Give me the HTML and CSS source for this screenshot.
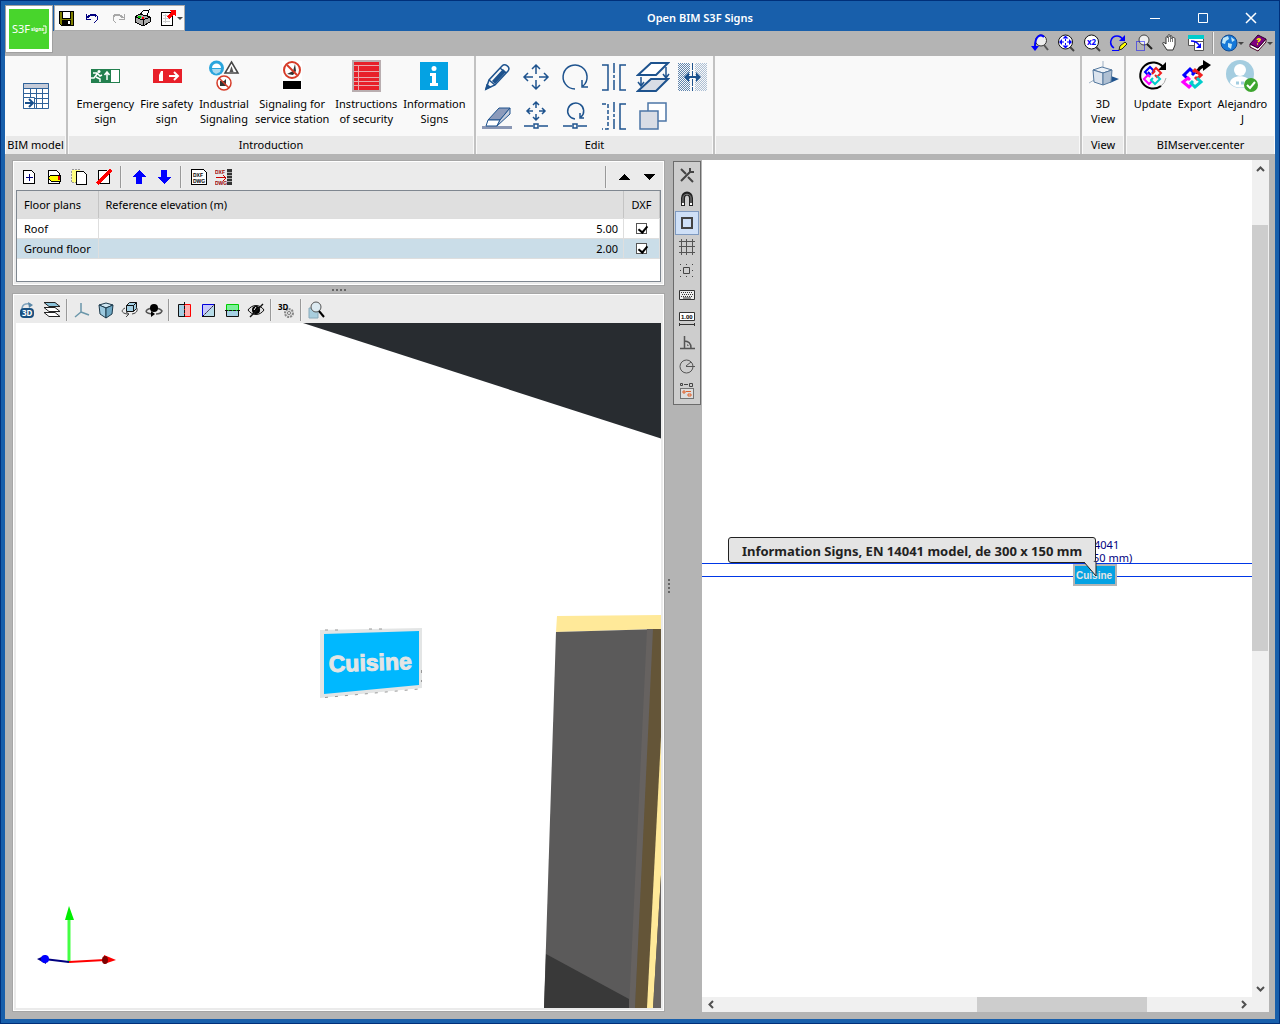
FILE: index.html
```html
<!DOCTYPE html>
<html lang="en">
<head>
  <meta charset="UTF-8">
  <meta name="viewport" content="width=device-width, initial-scale=1.0">
  <title>Open BIM S3F Signs</title>
  <link rel="stylesheet" href="styles.css">
</head>
<body>
<div class="window">

  <header class="header">
    <div class="titlebar">
      <div class="quick crisp">
        <button aria-label="Save"><svg width="16" height="16"><path d="M1 1h14v14H3l-2-2z" fill="#808000" stroke="#000"/><path d="M4 1h8v7H4z" fill="#fff" stroke="#000"/><path d="M4 10h9v5H4z" fill="#000"/><path d="M10 11h2v3h-2z" fill="#fff"/></svg></button>
        <button aria-label="Undo"><svg width="16" height="16" fill="none" stroke="#000080"><path d="M2 4v5h5M2 8l5-4h4l2 2v4l-3 3M3 8l5-3h3l1 2" /></svg></button>
        <button aria-label="Redo"><svg width="16" height="16" fill="none" stroke="#a8a8a8"><path d="M14 4v5H9M14 8L9 4H5L3 6v4l3 3M13 8L8 5H5L4 7"/></svg></button>
        <button aria-label="Print"><svg width="18" height="18"><path d="M5 7l4-5 6-1-2 6" fill="#fff" stroke="#000"/><path d="M1 8l5-3 10 3v5l-7 4-8-4z" fill="#a8a8a8" stroke="#000"/><path d="M1 8l8 3 7-3M9 11v6" fill="none" stroke="#000"/><path d="M4 8h3" stroke="#0c0" stroke-width="2"/><path d="M8 9h2" stroke="#f00" stroke-width="2"/></svg></button>
        <button class="drop" aria-label="Export sheet"><svg width="18" height="18"><path d="M2 3h11v13H2z" fill="#fff" stroke="#000"/><path d="M4 6h5M4 9h7M4 12h7M6 5v9" stroke="#ccc"/><path d="M9 9l5-5" stroke="#f00" stroke-width="3"/><path d="M10 1h7v7z" fill="#f00"/></svg></button>
      </div>
      <h1>Open BIM S3F Signs</h1>
      <div class="winctl">
        <button aria-label="Minimize"><svg width="12" height="12"><path d="M1 6.500h10" stroke="#fff"/></svg></button>
        <button aria-label="Maximize"><svg width="12" height="12"><path d="M1.500 1.500h9v9h-9z" fill="none" stroke="#fff"/></svg></button>
        <button aria-label="Close"><svg width="12" height="12"><path d="M1 1l10 10M11 1L1 11" stroke="#fff" stroke-width="1.500"/></svg></button>
      </div>
    </div>

    <button class="logo" aria-label="Application menu">
      <svg width="40" height="40"><path fill="#48d52c" d="M0 0h40v40H0z"/><text class="logo-name" x="3" y="24">S3F</text><text class="logo-sub" x="22" y="22">signs</text><path d="M34 17h3v7h-3" fill="none" stroke="#fff"/></svg>
    </button>

    <div class="viewbar">
      <button aria-label="Previous zoom"><svg width="18" height="18"><circle cx="10" cy="6.500" r="5.500" fill="#eee" stroke="#333"/><path d="M13 11l4 5" stroke="#555" stroke-width="2"/><path d="M13 3C9-1 4 3 4 12" fill="none" stroke="#00f" stroke-width="2"/><path d="M0 12h8l-4 5z" fill="#00f"/></svg></button>
      <button aria-label="Zoom extents"><svg width="18" height="18"><circle cx="8.500" cy="8" r="7" fill="#fff" stroke="#111"/><path d="M13 13l4 4" stroke="#444" stroke-width="2"/><path d="M8.500 1.500l3 3h-6zM8.500 14.500l3-3h-6zM2 8l3-3v6zM15 8l-3-3v6z" fill="#00f"/><path d="M8.500 5v2M8.500 9v2M5 8h2M10 8h2" stroke="#00f"/></svg></button>
      <button aria-label="Zoom times two"><svg width="18" height="18"><circle cx="8.500" cy="8" r="7" fill="#fff" stroke="#111"/><path d="M13 13l4 4" stroke="#444" stroke-width="2"/><text class="x2" x="4" y="11">x2</text></svg></button>
      <button aria-label="Redraw"><svg width="18" height="18"><path d="M5 14C-1 10 2 2 8 2c4 0 5 2 6 4" fill="none" stroke="#00f" stroke-width="1.500"/><path d="M16 1v6h-6z" fill="#00f"/><path d="M3 16.500h7" stroke="#00f"/><path d="M10 16l1-4 5-4 2 2-5 5z" fill="#ff0" stroke="#222"/></svg></button>
      <button aria-label="Zoom window"><svg width="18" height="18"><circle cx="9" cy="6" r="5" fill="#eee" stroke="#444"/><path d="M12 10l5 5" stroke="#222" stroke-width="2"/><path d="M1.500 7.500h8v9h-8z" fill="none" stroke="#00f" stroke-dasharray="1 1"/></svg></button>
      <button aria-label="Pan"><svg width="18" height="18"><path d="M6 16L2 10c-1-2 1-2 3 0V4c0-2 2-2 2 0V2c0-2 2-2 2 0v1c0-2 2-2 2 0v2c0-2 3-2 3 0v6l-2 5z" fill="#fff" stroke="#333"/><path d="M7.500 4v4M9.500 3v5M11.500 4v4" stroke="#777"/></svg></button>
      <button aria-label="Window list"><svg width="18" height="18"><path d="M1.500 1.500h15v10h-15z" fill="#fff" stroke="#555"/><path d="M1 1h16v4H1z" fill="#0cc"/><path d="M7.500 7.500h9v9h-9z" fill="#fff" stroke="#555"/><path d="M4 7c4 0 6 1 8 4" fill="none" stroke="#00f" stroke-width="1.500"/><path d="M14 9v5H9z" fill="#00f"/></svg></button>
      <span class="sep"></span>
      <button class="drop" aria-label="Web"><svg width="18" height="18"><circle cx="9" cy="9" r="8" fill="#1678d8" stroke="#124a90"/><path d="M3 4l5-2 1 3-3 2-1 3-3-1zM8 9l4 1-1 5-3-2zM11 3l4 3-3 2z" fill="#bfe6f8"/></svg></button>
      <button class="drop" aria-label="Help"><svg width="18" height="18"><path d="M1 10l8 4 8-9v3l-8 9-8-4z" fill="#fff" stroke="#402"/><path d="M1 10l8-9 8 4-8 9z" fill="#800080" stroke="#300030"/><path d="M8 6c1-2 4-1 3 0l-2 2M8 10h1" stroke="#ff0" stroke-width="1.500" fill="none"/></svg></button>
    </div>
  </header>

  <nav class="ribbon">
    <section class="group group-model">
      <div class="tools">
        <button class="big" aria-label="BIM model"><svg width="28" height="28"><path d="M1.500 1.500h25v25h-25z" fill="#fff" stroke="#2f6299"/><path d="M1.500 1.500h25v5h-25z" fill="#c5cbd8" stroke="#2f6299"/><path d="M2 11.500h24M2 16.500h24M2 21.500h24M8.500 6v20M14.500 6v20M20.500 6v20" stroke="#2f6299"/><path d="M1.500 15.500h11v11h-11z" fill="#fff" stroke="#2f6299"/><path d="M3 21h7M7 17l4 4-4 4" fill="none" stroke="#164f8c" stroke-width="2"/></svg></button>
      </div>
      <h2>BIM model</h2>
    </section>

    <section class="group group-intro">
      <div class="tools">
        <button class="big"><svg width="32" height="32"><path d="M2 9h29v14H2z" fill="#23804f"/><path d="M22 10h8v12h-8z" fill="#fff"/><circle cx="10" cy="11.500" r="1.500" fill="#fff"/><path d="M4 13l4 0 3 3 2-1M8 14l-3 4H2M7 17l4 2v3M18 20v-8M15.500 15l2.500-3 2.500 3" fill="none" stroke="#fff" stroke-width="1.500"/></svg><span>Emergency<br>sign</span></button>
        <button class="big"><svg width="32" height="32"><path d="M2 9h29v14H2z" fill="#e8202a"/><path d="M8 21v-6l2-4h2v10z" fill="#fff"/><path d="M18 16h8M23 12l4 4-4 4" fill="none" stroke="#fff" stroke-width="2"/></svg><span>Fire safety<br>sign</span></button>
        <button class="big"><svg width="32" height="32"><circle cx="8.500" cy="8" r="7.500" fill="#2aa5dd"/><path d="M4 8c0-6 9-6 9 0z" fill="#fff"/><path d="M4 9h9l-1 3-4 2-3-2z" fill="#a9d8ee"/><path d="M23.500 2l6.500 11H17z" fill="#fff" stroke="#444" stroke-width="1.500"/><path d="M23.500 6l2 6h-4z" fill="#555"/><circle cx="16" cy="23" r="7" fill="#fff" stroke="#d63b28" stroke-width="1.500"/><path d="M12 21h4l2-2v7h-6z" fill="#333"/><path d="M11 18l10 10" stroke="#d63b28" stroke-width="1.500"/></svg><span>Industrial<br>Signaling</span></button>
        <button class="big"><svg width="32" height="32"><path d="M6 1h20v29H6z" fill="#fff"/><path d="M11 14l6-3 2-7 1 7-3 4z" fill="#333"/><circle cx="16" cy="10" r="8" fill="none" stroke="#d63b28" stroke-width="2"/><path d="M11 5l10 10" stroke="#d63b28" stroke-width="2"/><path d="M7 21h18v8H7z"/></svg><span>Signaling for<br>service station</span></button>
        <button class="big"><svg width="32" height="32"><path d="M2 0h29v32H2z" fill="#b9aeb0"/><path d="M4 2h25v28H4z" fill="#e8202a"/><path d="M4 5.500h25M4 11.500h25M4 17.500h25M4 21.500h25M4 25.500h25M8.500 5v25" stroke="#e9a9ac"/></svg><span>Instructions<br>of security</span></button>
        <button class="big"><svg width="32" height="32"><path d="M2 2h28v28H2z" fill="#04a2e3"/><circle cx="16" cy="8.500" r="2.500" fill="#fff"/><path d="M12 13h6v10h2v3h-8v-3h2v-7h-2z" fill="#fff"/></svg><span>Information<br>Signs</span></button>
      </div>
      <h2>Introduction</h2>
    </section>

    <section class="group group-edit">
      <div class="edit-grid">
        <button aria-label="Edit"><svg width="32" height="32" fill="none" stroke="#1e538e" stroke-width="1.500"><path d="M5 28l3-9L21 5c3-3 9 1 6 5L14 24z"/><path d="M8 19l6 5M19 7l6 5"/><path d="M12 20L22 9l2 2-10 11z" fill="#1e538e"/><path d="M5 28l1-4 3 2z" fill="#1e538e"/></svg></button>
        <button aria-label="Move"><svg width="32" height="32" fill="none" stroke="#1e538e" stroke-width="1.500"><path d="M16 4v9M16 19v9M4 16h9M19 16h9M12 8l4-4 4 4M12 24l4 4 4-4M8 12l-4 4 4 4M24 12l4 4-4 4"/></svg></button>
        <button aria-label="Rotate"><svg width="32" height="32" fill="none" stroke="#1e538e" stroke-width="1.500"><path d="M16 28a12 12 0 1 1 8-3M29 26h-6v-7"/></svg></button>
        <button aria-label="Mirror"><svg width="32" height="32" fill="none" stroke="#1e538e" stroke-width="1.500"><path d="M4 4h6v25H4M28 4h-6v25h6"/><path d="M16 2v29" stroke-dasharray="10 2 3 2"/></svg></button>
        <button aria-label="Copy to floor"><svg width="34" height="34" fill="none" stroke="#1e538e" stroke-width="1.500"><path d="M2 15L15 3h17L20 15z" fill="#fff" stroke-width="2"/><path d="M2 31l13-12h17L20 31z" fill="#d9dde5" stroke-width="2"/><path d="M30 7v10M27 14l3 4 3-4M5 17v8M2 22l3 4 3-4"/></svg></button>
        <button aria-label="Symmetric move"><svg width="32" height="32"><defs><pattern id="mesh" width="2" height="2" patternUnits="userSpaceOnUse"><path d="M0 0h1v1H0zM1 1h1v1H1z" fill="#1e538e"/></pattern></defs><path d="M2 2h12v28H2z" fill="url(#mesh)" opacity=".7"/><path d="M19 2h12v28H19z" fill="url(#mesh)" opacity=".35"/><path d="M16.500 2v28" stroke="#1e538e" stroke-dasharray="7 1"/><path d="M10 16h13" stroke="#1e538e" stroke-width="2"/><path d="M13 11v10l-5-5zM20 11v10l5-5z" fill="#1e538e"/></svg></button>
        <button aria-label="Delete"><svg width="32" height="32"><path d="M1 26h30v3H1z" fill="#8a97b4"/><path d="M7 20L18 8h11l-10 12z" fill="#8c9bbb" stroke="#1e538e"/><path d="M7 20h12l-3 6H5z" fill="#fff" stroke="#1e538e"/><path d="M19 20L29 8v6L16 26z" fill="#c7cedd" stroke="#1e538e"/></svg></button>
        <button aria-label="Move node"><svg width="32" height="32" fill="none" stroke="#1e538e" stroke-width="1.500"><path d="M16 2v6M16 14v6M7 11h6M19 11h6M13 5l3-3 3 3M13 17l3 3 3-3M10 8l-3 3 3 3M22 8l3 3-3 3M4 26h9M19 26h9M14 24h4v4h-4z"/></svg></button>
        <button aria-label="Rotate node"><svg width="32" height="32" fill="none" stroke="#1e538e" stroke-width="1.500"><path d="M16 19a8 8 0 1 1 6-2M25 18h-4v-5M4 26h9M19 26h9M14 24h4v4h-4z"/></svg></button>
        <button aria-label="Mirror copy"><svg width="32" height="32" fill="none" stroke="#1e538e" stroke-width="1.500"><path d="M4 4h6v25H4" stroke-dasharray="4 2"/><path d="M28 4h-6v25h6"/><path d="M16 2v29" stroke-dasharray="10 2 3 2"/></svg></button>
        <button aria-label="Copy"><svg width="32" height="32" stroke="#4c76a6" stroke-width="1.500"><path d="M11 3h18v18H11z" fill="#fff"/><path d="M3 11h18v18H3z" fill="#d9dde5"/></svg></button>
      </div>
      <h2>Edit</h2>
    </section>

    <section class="group group-blank"><div class="tools"></div><h2></h2></section>

    <section class="group group-view">
      <div class="tools">
        <button class="big"><svg width="32" height="32"><path d="M2 23l5-3M16 1v6" stroke="#9fb1c4"/><path d="M24 16l8 3-9 4z" fill="#1e538e"/><path d="M6 10l9-3 10 3-9 3z" fill="#eef3f8" stroke="#54789e"/><path d="M6 10l10 3v12L7 22z" fill="#dce4ee" stroke="#54789e"/><path d="M25 10l-9 3v12l8-3z" fill="#afc0d3" stroke="#54789e"/></svg><span>3D<br>View</span></button>
      </div>
      <h2>View</h2>
    </section>

    <section class="group group-server">
      <div class="tools">
        <button class="big"><svg width="32" height="32" fill="none"><path d="M26 7A13 13 0 1 0 24 26" stroke="#000" stroke-width="2"/><path d="M24 26a13 13 0 0 0 5-8" stroke="#aaa"/><path d="M29 2v8h-8z" fill="#000"/><g stroke-width="2"><path d="M15 13l2-2-4-4-5 5 3 3" stroke="#00f"/><path d="M18 15l2 2 4-4-5-5-3 3" stroke="#f02020"/><path d="M13 17l-2-2-4 4 5 5 3-3" stroke="#f0f"/><path d="M16 18l-2 2 4 4 5-5-3-3" stroke="#0cc"/><path d="M11 12l3 3" stroke="#00f"/><path d="M18 11l-3 3" stroke="#f02020"/></g></svg><span>Update</span></button>
        <button class="big"><svg width="32" height="32" fill="none"><path d="M18 14c1-6 4-8 9-8" stroke="#000" stroke-width="3"/><path d="M24 0l8 5-8 6z" fill="#000"/><g stroke-width="3"><path d="M13 15l2-2-4-4-6 6 4 4" stroke="#00f"/><path d="M16 17l2 2 4-4-6-5-2 2" stroke="#f02020"/><path d="M11 20l-2-2-5 4 6 5 3-3" stroke="#f0f"/><path d="M14 21l-2 2 4 4 6-5-4-4" stroke="#0cc"/></g></svg><span>Export</span></button>
        <button class="big"><svg width="32" height="32"><circle cx="14" cy="14" r="14" fill="#a4cde0"/><circle cx="14" cy="10" r="6" fill="#fff"/><path d="M4 23c0-9 20-9 20 0-5 6-15 6-20 0z" fill="#fff"/><path d="M10 23h3M15 23h3" stroke="#a4cde0" stroke-width="3"/><circle cx="25" cy="25" r="7" fill="#3da52f"/><path d="M21 25l3 3 5-6" fill="none" stroke="#fff" stroke-width="2"/></svg><span>Alejandro<br>J</span></button>
      </div>
      <h2>BIMserver.center</h2>
    </section>
  </nav>

  <main class="work">
    <div class="left">
      <section class="panel">
        <div class="toolbar floorbar crisp">
          <button aria-label="New floor"><svg width="16" height="16"><path d="M2.500 1.500h8l3 3v10h-11z" fill="#fff" stroke="#000"/><path d="M5 8.500h7M8.500 5v7" stroke="#000080"/></svg></button>
          <button aria-label="Edit floor"><svg width="16" height="16"><path d="M2.500 1.500h8l3 3v10h-11z" fill="#fff" stroke="#000"/><path d="M2 9l3-3h9v6H5z" fill="#ff0" stroke="#000"/><path d="M12 7h2v4h-2z" fill="#d00"/></svg></button>
          <button aria-label="Copy floor"><svg width="18" height="18"><path d="M1.500 1.500h8v13h-8z" fill="#ffff80" stroke="#999" stroke-dasharray="2 1"/><path d="M6.500 3.500h7l3 3v10h-10z" fill="#fff" stroke="#000"/></svg></button>
          <button aria-label="Delete floor"><svg width="16" height="16"><path d="M2.500 1.500h8l3 3v10h-11z" fill="#fff" stroke="#000"/><path d="M1 15L15 1" stroke="#f00" stroke-width="3"/></svg></button>
          <span class="sep"></span>
          <button aria-label="Move up"><svg width="14" height="16"><path d="M7 1l7 7h-4v7H4V8H0z" fill="#00f"/></svg></button>
          <button aria-label="Move down"><svg width="14" height="16"><path d="M7 15l7-7h-4V1H4v7H0z" fill="#00f"/></svg></button>
          <span class="sep"></span>
          <button aria-label="DXF templates"><svg width="18" height="18"><path d="M1.500 1.500h12l3 3v12h-15z" fill="#fff" stroke="#000"/><text class="dxf" x="3" y="9">DXF</text><text class="dxf" x="3" y="15">DWG</text></svg></button>
          <button aria-label="DXF layers"><svg width="18" height="18"><text class="dxf red" x="0" y="6">DXF</text><text class="dxf red" x="0" y="17">DWG</text><path d="M1 9.500h10M8 7l3 3-3 3" stroke="#c00" fill="none"/><path d="M12 1h5v16h-5z" fill="#333"/><path d="M12 4.500h5M12 7.500h5M12 10.500h5M12 13.500h5" stroke="#aaa"/></svg></button>
          <span class="push sep"></span>
          <button aria-label="Collapse"><svg width="12" height="6"><path d="M6 0l6 6H0z"/></svg></button>
          <button aria-label="Expand"><svg width="12" height="6"><path d="M6 6l6-6H0z"/></svg></button>
        </div>
        <div class="floors">
          <table>
            <thead>
              <tr><th class="name">Floor plans</th><th>Reference elevation (m)</th><th class="dxfcol">DXF</th></tr>
            </thead>
            <tbody>
              <tr><td>Roof</td><td class="num">5.00</td><td class="dxfcol"><input type="checkbox" aria-label="DXF for Roof" checked></td></tr>
              <tr class="selected"><td>Ground floor</td><td class="num">2.00</td><td class="dxfcol"><input type="checkbox" aria-label="DXF for Ground floor" checked></td></tr>
            </tbody>
          </table>
        </div>
      </section>

      <div class="split-h"><i></i><i></i><i></i><i></i></div>

      <section class="panel panel-3d">
        <div class="toolbar">
          <button aria-label="Orbit 3D"><svg width="18" height="18"><path d="M3 8c0-6 7-6 9-4" fill="none" stroke="#7fa3bd" stroke-width="1.500"/><path d="M9 1l5 3-4 3z" fill="#5b88a8"/><rect x="1" y="7" width="14" height="10" rx="4" fill="#174f80"/><text class="tag3d light" x="3" y="15">3D</text></svg></button>
          <button aria-label="Layers"><svg width="18" height="18" stroke="#222"><path d="M1 11.500h11l5 4H6z" fill="#fff"/><path d="M1 6.500h11l5 4H6z" fill="#fff"/><path d="M1 1.500h11l5 4H6z" fill="#8cc4dc"/></svg></button>
          <span class="sep"></span>
          <button aria-label="Axes"><svg width="18" height="18" fill="none" stroke="#6b97aa" stroke-width="1.500"><path d="M8 2v9l-6 5M8 11l8 3"/></svg></button>
          <button aria-label="Solid view"><svg width="18" height="18" stroke="#1d3a4c"><path d="M2 4l7-2 7 2-7 3z" fill="#cfe6f1"/><path d="M2 4l7 3v10l-6-4z" fill="#9cc9df"/><path d="M16 4L9 7v10l6-4z" fill="#6fa8c4"/></svg></button>
          <button aria-label="Rotate cube"><svg width="18" height="18" fill="none" stroke="#111"><path d="M5.500 4.500l3-3h7v6l-3 3h-7z" fill="#a5d0e4"/><path d="M5.500 4.500h7v6M12.500 4.500l3-3"/><path d="M4 7c-4 2-4 5 2 6h1M11 13c6-1 6-5 4-7M5 11l3 2-3 3" stroke="#444"/></svg></button>
          <button aria-label="Look around"><svg width="18" height="18"><path d="M1 10c3-4 13-4 16 0-1 3-4 3-6 3M1 10c0 2 4 3 7 3" fill="none" stroke="#555" stroke-width="1.500"/><circle cx="9" cy="7" r="4"/><path d="M6 10l4 3-4 3z"/></svg></button>
          <span class="sep"></span>
          <button aria-label="Section X"><svg width="18" height="18"><path d="M3.500 3.500h6v12h-6z" fill="#a5d0e4" stroke="#111"/><path d="M9.500 3.500h6v12h-6z" fill="#ffb0b0" stroke="#f00"/><path d="M9.500 1v16" stroke="#111" stroke-dasharray="3 1"/></svg></button>
          <button aria-label="Section Y"><svg width="18" height="18"><path d="M3.500 3.500h12v12h-12z" fill="#c6c8fa" stroke="#00d"/><path d="M4 16h12V4z" fill="#b7dce8"/><path d="M4 15L15 4" stroke="#111" stroke-dasharray="2 1"/><path d="M3 15.500h12.500V3" fill="none" stroke="#111"/></svg></button>
          <button aria-label="Section Z"><svg width="18" height="18"><path d="M3.500 9.500h12v6h-12z" fill="#a5d0e4" stroke="#111"/><path d="M3.500 3.500h12v6h-12z" fill="#7cf09a" stroke="#0c0"/><path d="M2 9.500h15" stroke="#111" stroke-dasharray="3 1"/></svg></button>
          <button aria-label="Hide elements"><svg width="18" height="18"><path d="M1 9c4-6 12-6 16 0-4 6-12 6-16 0z" fill="#ddd" stroke="#111"/><circle cx="9" cy="9" r="4"/><path d="M7 9l2-3" stroke="#fff"/><path d="M3 16L16 3" stroke="#111" stroke-width="1.500"/></svg></button>
          <span class="sep"></span>
          <button aria-label="3D settings"><svg width="20" height="20"><circle cx="13" cy="13" r="4" fill="#ddd" stroke="#888" stroke-width="2" stroke-dasharray="2 1"/><circle cx="13" cy="13" r="1.500" fill="#fff" stroke="#777"/><text class="tag3d" x="2" y="10">3D</text></svg></button>
          <span class="sep"></span>
          <button aria-label="Zoom to part"><svg width="18" height="18"><path d="M2 7h9v10H2z" fill="#a9cede" stroke="#8ab"/><circle cx="9" cy="6" r="5" fill="#dceaf1" stroke="#555"/><path d="M12 10l5 6" stroke="#000" stroke-width="2"/></svg></button>
        </div>
        <div class="scene">
          <svg viewBox="0 0 645 685" preserveAspectRatio="xMaxYMax slice">
            <path d="M287 0H645V115.500z" fill="#282c30"/>
            <!-- door frame -->
            <path d="M541 293L645 292V306L540 309z" fill="#ffe999"/>
            <path d="M540 309L645 306V685H528z" fill="#5b5a5a"/>
            <path d="M530 631L613 676V685H528z" fill="#393939"/>
            <path d="M631 306H638L619 685H613z" fill="#666260"/>
            <path d="M637 306H645V685H619z" fill="#645538"/>
            <path d="M645 414V552L637 685H631z" fill="#ffe999"/>
            <path d="M645 552V685H637z" fill="#666260"/>
            <!-- sign -->
            <path d="M304 307L406 305V365L304 375z" fill="#e3e5e5"/>
            <path d="M308 311L403 308V362L308 371z" fill="#00b8ff"/>
            <path d="M309 307h16M353 306h16M405.500 347v12M309 374.500L403 366" stroke="#999" stroke-dasharray="3 7"/>
            <text class="sign-text" x="313" y="349" transform="rotate(-2 313 349)">Cuisine</text>
            <!-- axes -->
            <path d="M53 640V596" stroke="#4f4" stroke-width="3"/>
            <path d="M53 583l5 14h-9z" fill="#0e0"/>
            <path d="M53 639l36-2" stroke="#f00" stroke-width="2"/>
            <path d="M100 637l-12-5v9z" fill="#f00"/><ellipse cx="89" cy="637" rx="3" ry="4" fill="#800000"/>
            <path d="M53 639l-25-3" stroke="#000080" stroke-width="2"/>
            <path d="M21 636l9-4v9z" fill="#000080"/><circle cx="29" cy="636" r="4" fill="#00f"/>
          </svg>
        </div>
      </section>
    </div>

    <div class="split-v"><i></i><i></i><i></i><i></i></div>

    <div class="snapbar">
      <button aria-label="Settings"><svg width="16" height="16" fill="none" stroke="#444" stroke-width="2"><path d="M2 2l5 5M9 10l5 5M12 4L2 14M11 1v4h4"/></svg></button>
      <button aria-label="Object snap"><svg width="16" height="16"><path d="M4 15V7c0-6 8-6 8 0v8" fill="none" stroke="#222" stroke-width="4"/><path d="M4 12V7c0-5 8-5 8 0v5" fill="none" stroke="#888"/><path d="M3 12h2v2H3zM11 12h2v2h-2z" fill="#fff"/></svg></button>
      <button class="on" aria-label="Frame"><svg width="16" height="16"><path d="M3 3h10v10H3z" fill="none" stroke="#444" stroke-width="2"/></svg></button>
      <button aria-label="Grid"><svg width="16" height="16" stroke="#555"><path d="M2.500 0v16M7.500 0v16M13.500 0v16M0 2.500h16M0 7.500h16M0 13.500h16"/></svg></button>
      <button aria-label="Grid snap"><svg width="16" height="16" fill="none" stroke="#444"><path d="M4.500 4.500h6v6h-6z"/><path d="M1 1.500h13M1 13.500h13M1 7.500h1M13 7.500h1" stroke-dasharray="1 5"/></svg></button>
      <button aria-label="Keyboard"><svg width="16" height="16"><path d="M.5 3.500h15v9H.5z" fill="#eee" stroke="#333"/><path d="M2 5.500h12M3 7.500h11M2 9.500h12" stroke="#333" stroke-dasharray="1 1"/><path d="M4 11h8" stroke="#333"/></svg></button>
      <button aria-label="Dimension"><svg width="16" height="16"><path d="M.5 1.500h15v8H.5z" fill="#fff" stroke="#333"/><text class="dim" x="2" y="8">1.00</text><path d="M.5 13.500h15M.5 12v3M15.500 12v3" stroke="#333"/></svg></button>
      <button aria-label="Ortho"><svg width="16" height="16" fill="none" stroke="#555"><path d="M1 13.500h15M5.500 1v12M5 6c5 0 7 3 7 7" stroke-width="1.500"/><path d="M8 10h1v1"/></svg></button>
      <button aria-label="Polar"><svg width="16" height="16" fill="none" stroke="#555"><circle cx="7.500" cy="7.500" r="6.500"/><path d="M7 7.500h9M7 7l5-4"/></svg></button>
      <button aria-label="Selection"><svg width="16" height="18"><path d="M1.500 1.500h2v2h-2zM10.500 1.500h3v3h-3zM5 2.500h4" fill="none" stroke="#444"/><path d="M1.500 6.500h13v10h-13z" fill="#ddd" stroke="#111" stroke-dasharray="1 1"/><path d="M4 9h2v2H4zM9 12h3v2H9zM7 9.500h5" fill="none" stroke="#e0622c"/></svg></button>
    </div>

    <section class="plan">
      <div class="canvas">
        <svg class="drawing">
          <path class="sign-box" d="M372 405h42v20h-42z"/>
          <line x1="0" y1="403.500" x2="100%" y2="403.500"/>
          <line x1="0" y1="416.500" x2="371" y2="416.500"/>
          <line x1="415" y1="416.500" x2="100%" y2="416.500"/>
          <text class="plan-sign" x="374" y="419">Cuisine</text>
          <text class="plan-note" x="392" y="389">4041</text>
          <text class="plan-note" x="391" y="402">50 mm)</text>
        </svg>
        <div class="tip" role="tooltip">Information Signs, EN 14041 model, de 300 x 150 mm
          <svg width="16" height="16"><path d="M2 0l12 14V0" fill="#e4e4e4" stroke="#222"/></svg>
        </div>
      </div>
      <div class="scroll scroll-v">
        <button aria-label="Scroll up"><svg width="9" height="6"><path d="M1 5l3.500-3.500L8 5"/></svg></button>
        <div class="track"><div class="thumb"></div></div>
        <button aria-label="Scroll down"><svg width="9" height="6"><path d="M1 1l3.500 3.500L8 1"/></svg></button>
      </div>
      <div class="scroll scroll-h">
        <button aria-label="Scroll left"><svg width="6" height="9"><path d="M5 1L1.500 4.500 5 8"/></svg></button>
        <div class="track"><div class="thumb"></div></div>
        <button aria-label="Scroll right"><svg width="6" height="9"><path d="M1 1l3.500 3.500L1 8"/></svg></button>
      </div>
      <div class="corner"></div>
    </section>
  </main>
</div>
</body>
</html>
```
FILE: styles.css
```css
* {
  box-sizing: border-box;
}
body {
  margin: 0;
  font-family: "Noto Sans", "Open Sans", sans-serif;
  font-size: 11px;
  line-height: 15px;
  color: #000;
}
h1, h2 {
  margin: 0;
  font-size: 11px;
  font-weight: 400;
}
button {
  display: flex;
  align-items: center;
  justify-content: center;
  margin: 0;
  padding: 0;
  border: 0;
  background: none;
  font: inherit;
  color: inherit;
  cursor: pointer;
}
svg {
  display: block;
  flex: none;
}
.crisp svg {
  shape-rendering: crispEdges;
}

/* Window frame */
.window {
  display: flex;
  flex-direction: column;
  height: 100vh;
  min-height: 600px;
  border: 1px solid #00307a;
  background: #b4b4b4;
  box-shadow: inset 0 0 0 4px #185fab;
  padding: 0 4px 4px;
}

/* Title bar and view buttons */
.header {
  display: grid;
  grid-template-columns: 49px 1fr;
  grid-template-rows: 30px 25px;
  flex: none;
}
.titlebar {
  grid-area: 1 / 1 / 2 / 3;
  display: flex;
  align-items: center;
  padding-left: 49px;
  background: #185fab;
  color: #fff;
}
.titlebar h1 {
  flex: 1;
  padding: 2px 0 0 84px;
  text-align: center;
  font-weight: 600;
}
.quick {
  display: flex;
  align-self: flex-end;
  width: 131px;
  height: 26px;
  border: 1px solid #aaa;
  background: #f9f9f9;
}
.quick button {
  width: 26px;
  padding-right: 4px;
}
.quick .drop {
  padding: 0;
}
.logo {
  grid-area: 1 / 1 / 3 / 2;
  align-self: start;
  width: 48px;
  height: 48px;
  margin-top: 4px;
  border: 1px solid #a0a0a0;
  background: #fff;
}
.logo-name {
  font-size: 11px;
  fill: #fff;
}
.logo-sub {
  font-size: 5px;
  font-weight: 700;
  fill: #fff;
}
.winctl {
  display: flex;
  height: 26px;
  align-self: flex-end;
}
.winctl button {
  width: 48px;
}
.drop::after {
  content: "";
  border: 3px solid transparent;
  border-top-color: #444;
  border-bottom: 0;
}
.viewbar {
  grid-area: 2 / 2 / 3 / 3;
  display: flex;
  justify-content: flex-end;
  align-items: flex-start;
}
.viewbar button {
  width: 26px;
  height: 24px;
}
.viewbar .drop {
  width: 29px;
}
.viewbar .sep {
  margin: 1px 3px;
}
.x2 {
  font-size: 8px;
  font-weight: 700;
  fill: #00f;
}
.sep {
  width: 2px;
  height: 22px;
  border-left: 1px solid #999;
  border-right: 1px solid #f2f2f2;
}

/* Ribbon */
.ribbon {
  display: flex;
  flex: none;
  height: 98px;
  background: #f9f9f9;
}
.group {
  display: flex;
  flex-direction: column;
  border-right: 2px solid #c2c2c2;
}
.group h2 {
  height: 18px;
  margin: 0 1px;
  line-height: 18px;
  text-align: center;
  background: #e9e9e9;
}
.tools {
  display: flex;
  flex: 1;
  gap: 6px;
  justify-content: center;
  padding-top: 4px;
}
.big {
  flex-direction: column;
  justify-content: flex-start;
  gap: 4px;
  white-space: nowrap;
}
.group-model {
  flex: 0 0 63px;
}
.group-model .big {
  justify-content: center;
  padding-bottom: 4px;
}
.group-intro {
  flex: 0 0 408px;
}
.group-edit {
  flex: 0 0 239px;
}
.group-blank {
  flex: 1;
}
.group-view {
  flex: 0 0 44px;
}
.group-server {
  flex: 0 0 149px;
  border-right: 0;
}
.edit-grid {
  display: grid;
  grid-template-columns: repeat(6, 39px);
  grid-template-rows: repeat(2, 39px);
  flex: 1;
  padding: 1px 0 0 1px;
}

/* Work area */
.work {
  display: grid;
  grid-template-columns: minmax(0, 653fr) 8px 29px minmax(0, 567fr);
  flex: 1;
  min-height: 0;
  padding: 6px 6px 7px 7px;
}
.left {
  display: flex;
  flex-direction: column;
  min-height: 0;
}
.panel {
  display: flex;
  flex-direction: column;
  height: 126px;
  padding: 2px;
  border: 2px solid #fff;
  outline: 1px solid #a6a6a6;
  outline-offset: -1px;
  background: #ebebeb;
}
.panel-3d {
  flex: 1;
  min-height: 0;
}
.toolbar {
  display: flex;
  align-items: center;
  flex: none;
  height: 26px;
}
.toolbar button {
  width: 24px;
  height: 24px;
}
.toolbar .sep {
  margin: 0 2px;
}
.floorbar button {
  width: 25px;
}
.floorbar .sep {
  margin: 0 4px;
}
.toolbar .push {
  margin-left: auto;
}
.dxf {
  font: 700 5px "Liberation Sans", Arial, sans-serif;
}
.red {
  fill: #900;
}
.tag3d {
  font-size: 8px;
  font-weight: 700;
}
.light {
  fill: #fff;
}

/* Floor table */
.floors {
  flex: 1;
  border: 1px solid #7f8790;
  background: #fff;
}
table {
  width: 100%;
  border-collapse: collapse;
  table-layout: fixed;
}
th, td {
  height: 20px;
  padding: 0 5px 0 7px;
  border-right: 1px solid #dedede;
  border-bottom: 1px solid #dedede;
  text-align: left;
  font-weight: 400;
  white-space: nowrap;
}
th {
  height: 27px;
  background: #dfdfdf;
  border-right-color: #c4c4c4;
}
.name {
  width: 81px;
}
td.num {
  text-align: right;
}
th.dxfcol, td.dxfcol {
  width: 36px;
  padding: 0;
  text-align: center;
}
.selected td {
  background: #cadde8;
}
input[type="checkbox"] {
  appearance: none;
  display: block;
  width: 11px;
  height: 11px;
  margin: 0 auto;
  border: 1px solid #555;
  background: #fff;
}
input[type="checkbox"]:checked::after {
  content: "";
  display: block;
  width: 4px;
  height: 7px;
  margin: 0 0 0 3px;
  border: solid #000;
  border-width: 0 2px 2px 0;
  transform: rotate(40deg);
}

/* Splitters */
.split-h, .split-v {
  display: flex;
  align-items: center;
  justify-content: center;
  gap: 2px;
}
.split-h {
  flex: none;
  height: 7px;
}
.split-v {
  flex-direction: column;
}
.split-h i, .split-v i {
  width: 2px;
  height: 2px;
  background: #666;
}

/* 3D view */
.scene {
  flex: 1;
  min-height: 0;
  background: #fff;
}
.scene svg {
  width: 100%;
  height: 100%;
}
.sign-text {
  font: 700 23px "Liberation Sans", Arial, sans-serif;
  fill: #e3e5e5;
  stroke: #e3e5e5;
  stroke-width: 1px;
}

/* Snap buttons */
.snapbar {
  align-self: start;
  width: 28px;
  margin-top: 1px;
  padding: 1px;
  border: 1px solid #6b6b6b;
  background: #cdcdcd;
}
.snapbar button {
  width: 24px;
  height: 24px;
}
.snapbar .on {
  border: 1px solid #7f9ac0;
  background: #cfe0f7;
}
.dim {
  font: 700 6px "Liberation Sans", Arial, sans-serif;
}

/* Floor plan */
.plan {
  display: grid;
  grid-template-columns: 1fr 17px;
  grid-template-rows: 1fr 15px;
  min-height: 0;
}
.canvas {
  position: relative;
  overflow: hidden;
  background: #fff;
}
.drawing {
  width: 100%;
  height: 100%;
}
.drawing line {
  stroke: #0037e6;
}
.sign-box {
  fill: #04a2e3;
  stroke: #b5b5b5;
  stroke-width: 2px;
}
.plan-sign {
  font: 700 10px "Liberation Sans", Arial, sans-serif;
  fill: #e3e5e5;
}
.plan-note {
  font-size: 11px;
  fill: #000080;
}
.tip {
  position: absolute;
  left: 26px;
  top: 377px;
  width: 368px;
  height: 26px;
  border: 1px solid #222;
  border-radius: 3px;
  background: #e4e4e4;
  font-size: 13px;
  font-weight: 700;
  line-height: 27px;
  text-align: center;
  color: #222;
  white-space: nowrap;
}
.tip svg {
  position: absolute;
  right: 0;
  top: 24px;
  margin-right: -3px;
}
.scroll, .corner {
  display: flex;
  background: #f0f0f0;
}
.scroll-v {
  flex-direction: column;
}
.scroll button {
  flex: 0 0 17px;
}
.scroll path {
  fill: none;
  stroke: #505050;
  stroke-width: 2;
}
.track {
  display: flex;
  flex: 1;
  min-height: 0;
}
.scroll-v .track {
  flex-direction: column;
}
.scroll-v .track::before {
  content: "";
  flex: 0 0 6%;
}
.scroll-h .track::before {
  content: "";
  flex: 0 0 50%;
}
.thumb {
  background: #cdcdcd;
}
.scroll-v .thumb {
  flex: 0 0 53%;
  width: 16px;
}
.scroll-h .thumb {
  flex: 0 0 33%;
}
```
